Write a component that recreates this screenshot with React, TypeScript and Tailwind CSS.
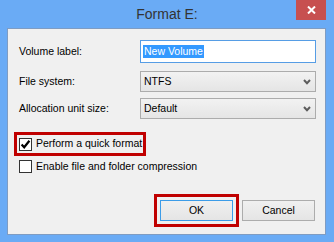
import React from 'react';

const font = { fontFamily: '"Liberation Sans", Arial, sans-serif' };

const Chevron: React.FC = () => (
    <svg width="8" height="6" viewBox="0 0 8 6" className="shrink-0">
        <path d="M1 1 L4 4.2 L7 1" fill="none" stroke="#5c5c5c" strokeWidth="2" />
    </svg>
);

const Select: React.FC<{ value: string }> = ({ value }) => (
    <div className="w-[176px] h-[21px] border border-[#acacac] bg-gradient-to-b from-[#f2f2f2] to-[#e5e5e5] flex items-center justify-between pl-[3px] pr-[4px] text-black">
        <span>{value}</span>
        <Chevron />
    </div>
);

const Checkbox: React.FC<{ checked?: boolean }> = ({ checked }) => (
    <div className="w-[13px] h-[13px] border border-[#333333] bg-white flex items-center justify-center shrink-0">
        {checked && (
            <svg width="11" height="11" viewBox="0 0 11 11">
                <path d="M1.6 5.4 L4.2 8.2 L9.4 1.8" fill="none" stroke="#000" strokeWidth="2.2" />
            </svg>
        )}
    </div>
);

const Button: React.FC<{ label: string; primary?: boolean }> = ({ label, primary }) => (
    <div
        className={`w-[73px] h-[21px] flex items-center justify-center bg-gradient-to-b from-[#f0f0f0] to-[#e5e5e5] text-black border ${
            primary ? 'border-[#3c9ce8]' : 'border-[#acacac]'
        }`}
    >
        {label}
    </div>
);

export default function App() {
    return (
        <div className="w-[334px] h-[242px] bg-[#6aabf5] flex flex-col text-[10.5px]" style={font}>
            {/* title bar */}
            <div className="relative h-[28px] flex items-center justify-center shrink-0">
                <span className="text-[14px] text-[#333333]">Format E:</span>
                <div className="absolute right-[8px] top-0 w-[30px] h-[20px] bg-[#c75050] flex items-center justify-center">
                    <svg width="9" height="8" viewBox="0 0 9 8">
                        <path d="M1 0.5 L8 7.5 M8 0.5 L1 7.5" stroke="#fff" strokeWidth="2" />
                    </svg>
                </div>
            </div>

            {/* body */}
            <div className="ml-[7px] mr-[8px] h-[207px] border border-[#7f9cc2] bg-[#f0f0f0] flex flex-col shrink-0">
                <div className="pl-[11px] pt-[11px] flex flex-col">
                    <div className="flex items-center h-[23px]">
                        <span className="w-[121px]">Volume label:</span>
                        <div className="w-[176px] h-[23px] border border-[#569de5] bg-white flex items-center pl-[2px]">
                            <span className="bg-[#3399ff] text-white px-[1px] leading-[13px] h-[13px]">New Volume</span>
                        </div>
                    </div>
                    <div className="flex items-center h-[21px] mt-[8px]">
                        <span className="w-[121px]">File system:</span>
                        <Select value="NTFS" />
                    </div>
                    <div className="flex items-center h-[21px] mt-[6px]">
                        <span className="w-[121px]">Allocation unit size:</span>
                        <Select value="Default" />
                    </div>
                </div>

                <div className="pl-[6px] mt-[13px] flex">
                    <div className="h-[24px] w-[132px] border-[3px] border-[#c00000] flex items-center pl-[2px] gap-[4px]">
                        <Checkbox checked />
                        <span className="text-black">Perform a quick format</span>
                    </div>
                </div>
                <div className="pl-[11px] mt-[3px] h-[15px] flex items-center gap-[4px]">
                    <Checkbox />
                    <span className="text-black">Enable file and folder compression</span>
                </div>

                <div className="flex justify-end items-center pr-[10px] mt-[20px]">
                    <div className="border-[3px] border-[#c00000] p-[3px]">
                        <Button label="OK" primary />
                    </div>
                    <div className="ml-[3px]">
                        <Button label="Cancel" />
                    </div>
                </div>
            </div>
        </div>
    );
}
